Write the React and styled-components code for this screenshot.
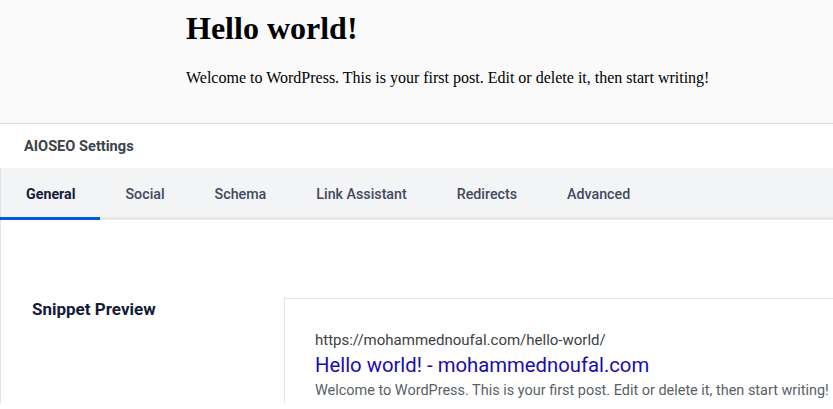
import React from "react";
import styled, { createGlobalStyle } from "styled-components";

const GlobalStyle = createGlobalStyle`
  html, body {
    margin: 0;
    padding: 0;
    background: #ffffff;
  }
  body {
    overflow: hidden;
  }
`;

const PostHeader = styled.header`
  box-sizing: border-box;
  height: 124px;
  padding: 10px 0 0 186px;
  background: #fafafa;
  border-bottom: 1px solid #dcdcde;
  font-family: "Liberation Serif", "Times New Roman", serif;
  color: #000;
`;

const PostTitle = styled.h1`
  margin: 0 0 22px;
  font-size: 32px;
  font-weight: 700;
  line-height: normal;
`;

const PostText = styled.p`
  margin: 0;
  font-size: 16px;
  line-height: normal;
`;

const Panel = styled.section`
  font-family: Roboto, "Noto Sans", sans-serif;
`;

const PanelTitle = styled.div`
  height: 44px;
  display: flex;
  align-items: center;
  padding-left: 24px;
  font-size: 14.6px;
  font-weight: 700;
  color: #3c434a;
`;

const TabBar = styled.nav`
  display: flex;
  height: 49px;
  background: #f3f4f5;
  border-bottom: 3px solid #e8e8eb;
  border-left: 1px solid #e2e4e7;
`;

const Tab = styled.div`
  display: flex;
  align-items: center;
  padding: 3px 25px 0;
  margin-bottom: -3px;
  font-size: 14.25px;
  font-weight: ${(p) => (p.$active ? 700 : 500)};
  color: ${(p) => (p.$active ? "#141b38" : "#434960")};
  border-bottom: 3px solid ${(p) => (p.$active ? "#005ae0" : "transparent")};
  margin-left: ${(p) => (p.$first ? "-1px" : "0")};
  padding-left: ${(p) => (p.$first ? "26px" : "25px")};
`;

const Body = styled.div`
  display: grid;
  grid-template-columns: 283px 1fr;
  padding-top: 78px;
  border-left: 1px solid #e2e4e7;
`;

const Label = styled.div`
  padding-left: 31px;
  font-size: 17px;
  font-weight: 700;
  line-height: 22px;
  color: #141b38;
`;

const SnippetBox = styled.div`
  border-top: 1px solid #e2e4e7;
  border-left: 1px solid #e2e4e7;
  padding: 30px 0 0 30px;
  white-space: nowrap;
`;

const SnippetUrl = styled.div`
  font-size: 15px;
  line-height: 22px;
  color: #3c4043;
`;

const SnippetTitle = styled.div`
  font-size: 20.3px;
  line-height: 28px;
  color: #1a0dab;
`;

const SnippetDesc = styled.div`
  font-size: 14.45px;
  line-height: 24px;
  color: #595f66;
`;

const tabs = ["General", "Social", "Schema", "Link Assistant", "Redirects", "Advanced"];

export default function App() {
  return (
    <>
      <GlobalStyle />
      <PostHeader>
        <PostTitle>Hello world!</PostTitle>
        <PostText>
          Welcome to WordPress. This is your first post. Edit or delete it, then start writing!
        </PostText>
      </PostHeader>
      <Panel>
        <PanelTitle>AIOSEO Settings</PanelTitle>
        <TabBar>
          {tabs.map((t, i) => (
            <Tab key={t} $active={i === 0} $first={i === 0}>
              {t}
            </Tab>
          ))}
        </TabBar>
        <Body>
          <Label>Snippet Preview</Label>
          <SnippetBox>
            <SnippetUrl>https://mohammednoufal.com/hello-world/</SnippetUrl>
            <SnippetTitle>Hello world! - mohammednoufal.com</SnippetTitle>
            <SnippetDesc>
              Welcome to WordPress. This is your first post. Edit or delete it, then start writing!
            </SnippetDesc>
          </SnippetBox>
        </Body>
      </Panel>
    </>
  );
}
